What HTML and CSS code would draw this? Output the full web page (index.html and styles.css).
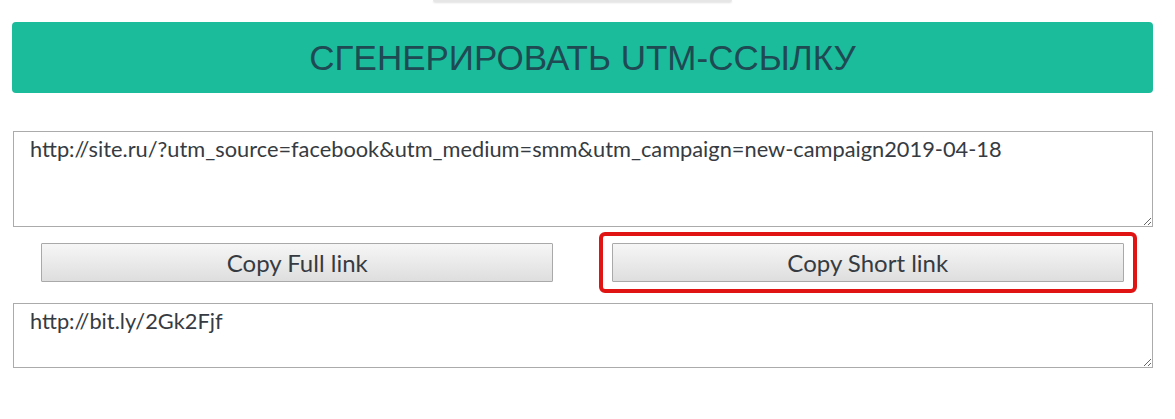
FILE: index.html
```html
<!DOCTYPE html>
<html lang="ru">
<head>
<meta charset="utf-8">
<link rel="stylesheet" href="styles.css">
</head>
<body>
<div class="page">
  <div class="top-tab"></div>
  <button class="generate">СГЕНЕРИРОВАТЬ UTM-ССЫЛКУ</button>
  <textarea class="field field-full">http://site.ru/?utm_source=facebook&amp;utm_medium=smm&amp;utm_campaign=new-campaign2019-04-18</textarea>
  <div class="actions">
    <div class="cell"><button class="copy">Copy Full link</button></div>
    <div class="cell"><div class="highlight"><button class="copy">Copy Short link</button></div></div>
  </div>
  <textarea class="field field-short">http://bit.ly/2Gk2Fjf</textarea>
</div>
</body>
</html>
```
FILE: styles.css
```css
html, body {
  margin: 0;
  padding: 0;
  background: #fff;
}
.page {
  width: 1141px;
  margin-left: 12px;
  display: flex;
  flex-direction: column;
}
.top-tab {
  width: 299px;
  height: 2px;
  margin: 0 auto;
  background: #e6e6e6;
  border-radius: 0 0 4px 4px;
  box-shadow: 0 1px 2px rgba(0,0,0,0.12);
}
.generate {
  margin-top: 20px;
  height: 71px;
  width: 100%;
  border: none;
  border-radius: 4px;
  background: #1abc9c;
  color: #1f4953;
  font-family: "Liberation Sans", Arial, sans-serif;
  font-size: 35px;
  font-weight: 400;
  padding: 0;
  cursor: pointer;
}
.field {
  box-sizing: border-box;
  margin-left: 1px;
  width: 1140px;
  border: 1px solid #ababab;
  border-radius: 0;
  padding: 3px 16px;
  font-family: Lato, "Open Sans", sans-serif;
  font-size: 21.8px;
  color: #363b42;
  background: #fff;
  outline: none;
}
.field-full {
  margin-top: 38px;
  height: 96px;
}
.field-short {
  margin-top: 10px;
  height: 65px;
}
.actions {
  margin-top: 5px;
  display: grid;
  grid-template-columns: 1fr 1fr;
  align-items: center;
}
.cell {
  display: flex;
  justify-content: center;
}
.highlight {
  border: 4px solid #e11414;
  border-radius: 6px;
  padding: 7px 9px;
  display: flex;
}
.copy {
  width: 512px;
  height: 39px;
  border: 1px solid #a9a9a9;
  border-radius: 1px;
  background: linear-gradient(#f6f6f6, #dedede);
  font-family: Lato, "Open Sans", sans-serif;
  font-size: 24px;
  color: #363b42;
  padding: 0;
  cursor: pointer;
}
```
